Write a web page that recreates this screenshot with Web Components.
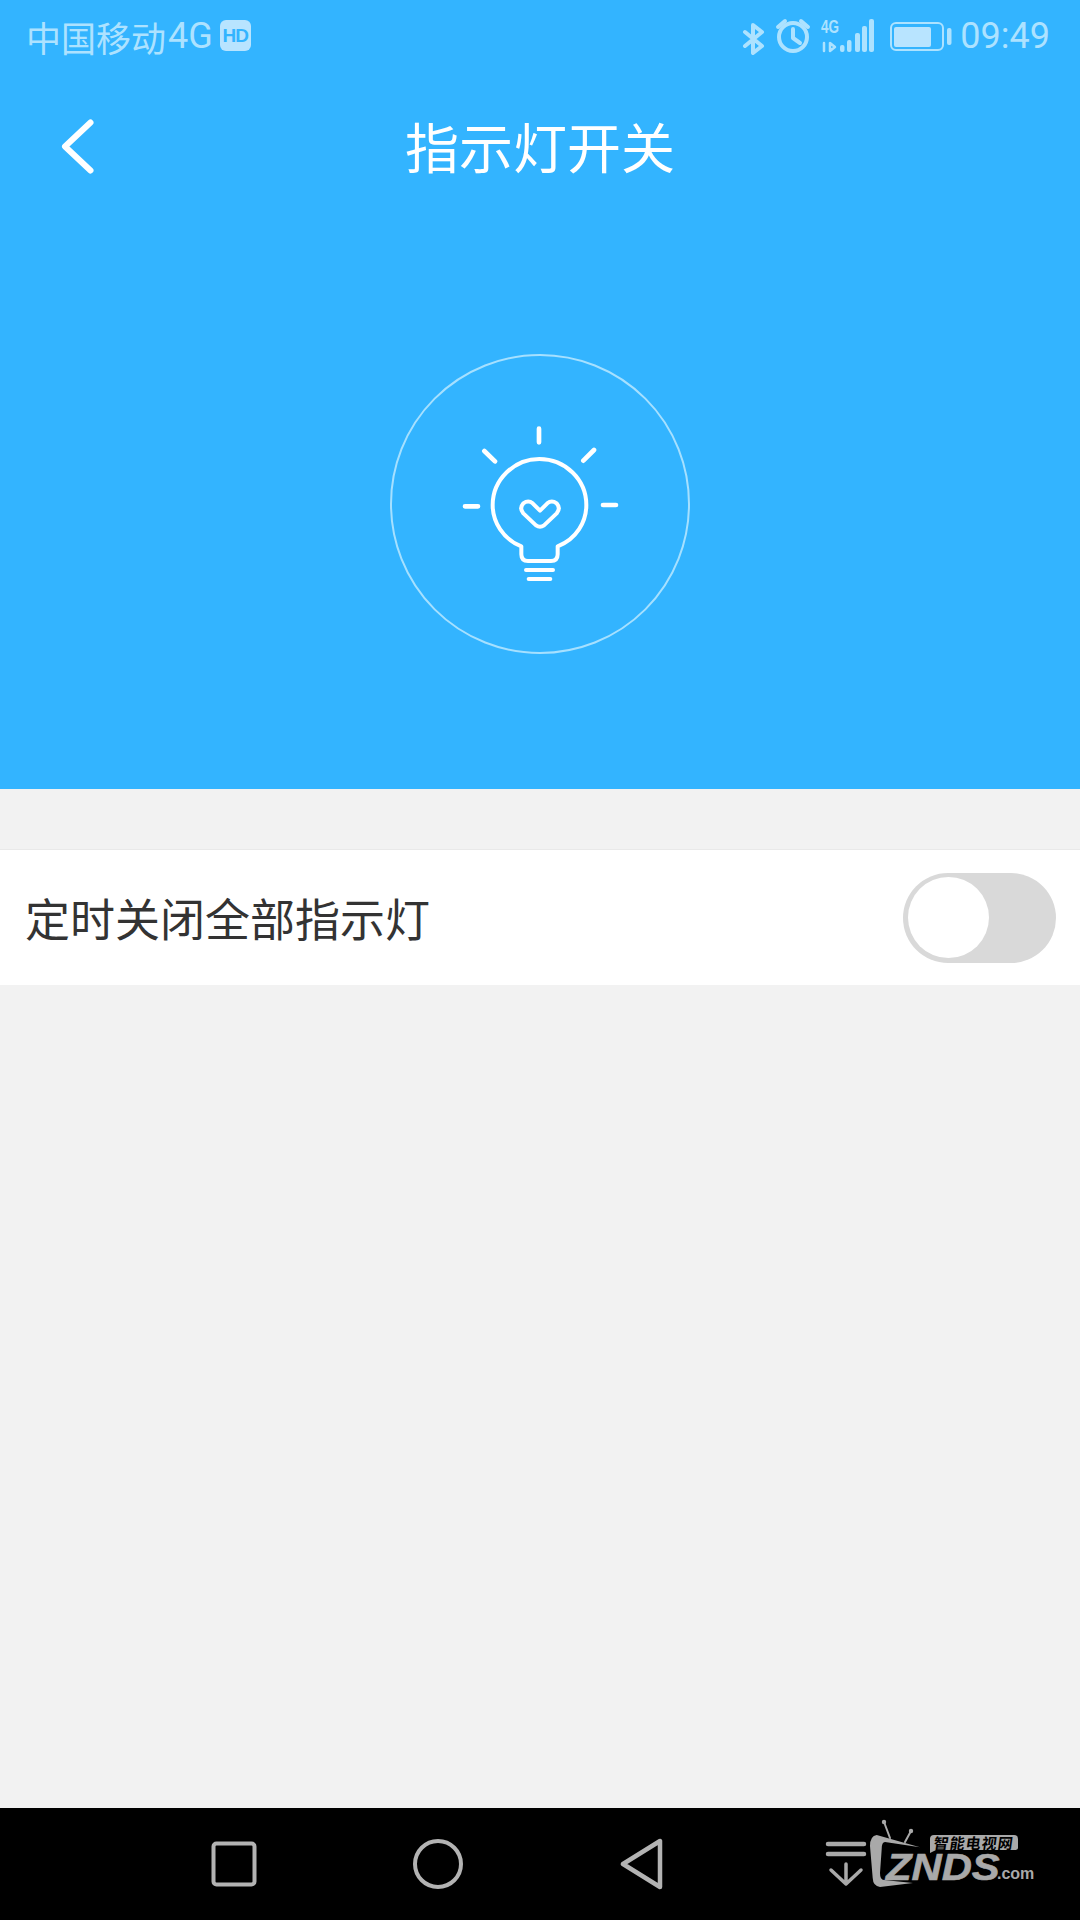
<!DOCTYPE html>
<html lang="zh">
<head>
<meta charset="utf-8">
<title>指示灯开关</title>
<style>
  html, body { margin: 0; padding: 0; }
  body {
    width: 1080px;
    height: 1920px;
    display: flex;
    flex-direction: column;
    background: #f2f2f2;
    font-family: "Noto Sans CJK SC", "Noto Sans", sans-serif;
  }
</style>
</head>
<body>
  <lamp-header title-text="指示灯开关">
    <status-bar carrier="中国移动" network="4G" time="09:49"></status-bar>
  </lamp-header>
  <main style="flex:1;display:block">
    <setting-row>定时关闭全部指示灯</setting-row>
  </main>
  <nav-bar></nav-bar>

<script>
class StatusBar extends HTMLElement {
  connectedCallback() {
    if (this.shadowRoot) return;
    const carrier = this.getAttribute("carrier") || "";
    const network = this.getAttribute("network") || "";
    const time = this.getAttribute("time") || "";
    const root = this.attachShadow({ mode: "open" });
    root.innerHTML = `
      <style>
        :host {
          display: flex;
          align-items: center;
          height: 72px;
          padding: 0 30px 0 26px;
          color: #ade2ff;
          font-size: 35px;
          line-height: 1;
        }
        .carrier { display: flex; align-items: center; flex: 1; }
        .carrier span { font-family: "Noto Sans CJK SC", sans-serif; font-weight: 400; }
        .carrier .net { font-family: Roboto, sans-serif; font-size: 36px; margin-left: 2px; }
        .hd {
          width: 31px;
          height: 31px;
          margin: -2px 0 0 7px;
          border-radius: 6px;
          background: #b8e4ff;
          color: #33b4ff;
          font: bold 19px/31px "Liberation Sans", sans-serif;
          text-align: center;
          letter-spacing: -1px;
        }
        svg { display: block; overflow: visible; }
        .icons { display: flex; align-items: center; }
        .time { font-family: Roboto, "Liberation Sans", sans-serif; font-weight: 400; font-size: 36px; margin-left: 8px; }
        .s { fill: none; stroke: #ade2ff; stroke-width: 4; stroke-linecap: round; stroke-linejoin: round; }
        .f { fill: #ade2ff; }
        text { font: bold 19px "Liberation Sans", sans-serif; fill: #ade2ff; }
      </style>
      <div class="carrier"><span>${carrier}</span><span class="net">${network}</span><div class="hd">HD</div></div>
      <div class="icons">
        <svg width="212" height="40" viewBox="740 16 212 40">
          <path class="s" d="M745 32 L762 46 L753 53 V25 L762 32 L745 46"/>
          <circle class="s" cx="793" cy="37" r="14"/>
          <path class="s" d="M793 29 V38 L800 43 M778 27 L785 21 M808 27 L801 21"/>
          <text x="821" y="33" textLength="18" lengthAdjust="spacingAndGlyphs">4G</text>
          <path class="s" style="stroke-width:2.500" d="M824 43 V51 M830 43 V51 L835 47 Z"/>
          <rect class="f" x="840" y="45" width="4.500" height="7" rx="2"/>
          <rect class="f" x="847" y="40" width="4.500" height="12" rx="2"/>
          <rect class="f" x="855" y="33" width="5" height="19" rx="2"/>
          <rect class="f" x="862" y="26" width="5" height="26" rx="2"/>
          <rect class="f" x="869" y="19" width="5" height="33" rx="2"/>
          <rect x="891" y="23" width="52" height="27" rx="5" fill="none" stroke="#ade2ff" stroke-width="2"/>
          <rect x="894" y="27" width="37" height="20" rx="2" fill="#b8e4ff"/>
          <rect class="f" x="947" y="28" width="4.500" height="17" rx="2"/>
        </svg>
        <span class="time">${time}</span>
      </div>
    `;
  }
}
customElements.define("status-bar", StatusBar);

class LampHeader extends HTMLElement {
  connectedCallback() {
    if (this.shadowRoot) return;
    const title = this.getAttribute("title-text") || "";
    const root = this.attachShadow({ mode: "open" });
    root.innerHTML = `
      <style>
        :host {
          display: block;
          height: 789px;
          background: #33b4ff;
          color: #fff;
        }
        .toolbar {
          height: 152px;
          display: grid;
          grid-template-columns: 140px 1fr 140px;
          align-items: center;
        }
        .back { padding: 0 0 3px 60px; }
        svg { display: block; }
        h1 {
          margin: 0;
          padding-bottom: 5px;
          text-align: center;
          font-family: "Noto Sans CJK SC", sans-serif;
          font-size: 54px;
          font-weight: 400;
          line-height: 1;
        }
        .hero { display: flex; justify-content: center; padding-top: 130px; }
      </style>
      <slot></slot>
      <div class="toolbar">
        <div class="back">
          <svg width="36" height="58" viewBox="0 0 36 58" fill="none" stroke="#fff" stroke-width="6" stroke-linecap="round" stroke-linejoin="round">
            <path d="M30.500 4.500 L5 28.500 L30.500 52.500"/>
          </svg>
        </div>
        <h1>${title}</h1>
      </div>
      <div class="hero">
        <svg width="320" height="320" viewBox="0 0 960 960" style="margin-top:-9px" fill="none" stroke="#fff" stroke-linecap="round" stroke-linejoin="round">
          <circle cx="480" cy="477" r="447" stroke="#a6e0ff" stroke-width="6"/>
          <g stroke-width="14">
            <path d="M477 251 V292 M313 318 L345 349 M642 315 L610 347 M255 484 H294 M669 480 H708"/>
            <path stroke-width="12" d="M424 604 C368 582 338 530 338 480 C338 404 402 342 478 342 C556 342 619 404 619 480 C619 530 590 582 533 604 V628 Q533 648 513 648 H444 Q424 648 424 628 Z"/>
            <path stroke-width="12" d="M438 675 H519 M446 702 H511"/>
            <path stroke-width="12" d="M480 497 L502 475 Q515 464 530 475 Q543 490 530 505 L492 541 Q480 549 468 541 L430 505 Q417 490 430 475 Q445 464 458 475 Z"/>
          </g>
        </svg>
      </div>
    `;
  }
}
customElements.define("lamp-header", LampHeader);

class ToggleSwitch extends HTMLElement {
  connectedCallback() {
    if (this.shadowRoot) return;
    const root = this.attachShadow({ mode: "open" });
    root.innerHTML = `
      <style>
        :host {
          display: flex;
          align-items: center;
          box-sizing: border-box;
          width: 153px;
          height: 90px;
          padding: 0 5px;
          border-radius: 45px;
          background: #d9d9d9;
        }
        .knob { width: 81px; height: 81px; border-radius: 50%; background: #fff; }
      </style>
      <div class="knob"></div>
    `;
  }
}
customElements.define("toggle-switch", ToggleSwitch);

class SettingRow extends HTMLElement {
  connectedCallback() {
    if (this.shadowRoot) return;
    const root = this.attachShadow({ mode: "open" });
    root.innerHTML = `
      <style>
        :host {
          display: flex;
          align-items: center;
          justify-content: space-between;
          box-sizing: border-box;
          height: 136px;
          margin-top: 60px;
          padding: 0 24px 0 25px;
          background: #fff;
          border-top: 1px solid #e9e9e9;
          color: #333;
          font-family: "Noto Sans CJK SC", sans-serif;
          font-size: 45px;
          font-weight: 400;
          line-height: 1;
        }
      </style>
      <slot></slot>
      <toggle-switch></toggle-switch>
    `;
  }
}
customElements.define("setting-row", SettingRow);

class ZndsLogo extends HTMLElement {
  connectedCallback() {
    if (this.shadowRoot) return;
    const root = this.attachShadow({ mode: "open" });
    root.innerHTML = `
      <style>
        :host {
          display: block;
          position: relative;
          width: 212px;
          height: 80px;
          color: #a9a9a9;
        }
        svg { display: block; overflow: visible; }
        span { position: absolute; white-space: nowrap; line-height: 1; }
        .cn {
          left: 110px;
          top: 11px;
          font: bold 15px/1 "Noto Sans CJK SC", sans-serif;
          letter-spacing: 1px;
          color: #000;
          transform: skewX(-8deg);
        }
        .znds {
          left: 62px;
          top: 26px;
          font: italic bold 36px/1 "Liberation Sans", sans-serif;
          -webkit-text-stroke: 0.6px #a9a9a9;
          transform: scaleX(1.16);
          transform-origin: left top;
        }
        .com {
          left: 173px;
          top: 42px;
          font: bold 16px/1 "Liberation Sans", sans-serif;
        }
      </style>
      <svg width="212" height="80" viewBox="0 0 212 80" fill="none" stroke="#a9a9a9" stroke-linecap="round" stroke-linejoin="round">
        <path stroke-width="4.500" d="M4 20 H40 M4 30 H40"/>
        <path stroke-width="3.500" d="M22 40 V60 M7 46 L22 60 L37 46"/>
        <path stroke-width="2" d="M60 -2 L66 14 M87 7 L81 18"/>
        <circle cx="60" cy="-2" r="2.200" fill="#a9a9a9" stroke="none"/>
        <circle cx="87" cy="7" r="2.200" fill="#a9a9a9" stroke="none"/>
        <path fill="#a9a9a9" stroke="none" d="M52.700 11 L96 23.300 L61 18 Q57.700 18 57.700 25 L56 49 Q56 56 60 56 L89 59 L56 63 Q49 62 48.700 54 L46 22 Q46 12 52.700 11 Z"/>
        <path fill="#a9a9a9" stroke="none" d="M110 11 H190 Q194 11 194 15 V24 Q194 26 190 26 H112 L106 29 L106 15 Q106 11 110 11 Z"/>
      </svg>
      <span class="cn">智能电视网</span>
      <span class="znds">ZNDS</span>
      <span class="com">.com</span>
    `;
  }
}
customElements.define("znds-logo", ZndsLogo);

class NavBar extends HTMLElement {
  connectedCallback() {
    if (this.shadowRoot) return;
    const root = this.attachShadow({ mode: "open" });
    root.innerHTML = `
      <style>
        :host {
          display: flex;
          flex: none;
          align-items: center;
          height: 112px;
          padding-left: 132px;
          background: #000;
        }
        .slot { width: 204px; display: flex; justify-content: center; flex: none; }
        .logo { justify-content: flex-start; padding-left: 80px; box-sizing: border-box; }
        svg { display: block; }
      </style>
      <div class="slot">
        <svg width="46" height="46" viewBox="0 0 46 46"><rect x="2.500" y="2.500" width="41" height="41" rx="3" fill="none" stroke="#b3b3b3" stroke-width="4"/></svg>
      </div>
      <div class="slot">
        <svg width="50" height="50" viewBox="0 0 50 50"><circle cx="25" cy="25" r="23" fill="none" stroke="#b3b3b3" stroke-width="4"/></svg>
      </div>
      <div class="slot">
        <svg width="44" height="52" viewBox="0 0 44 52"><path d="M40 3 V49 L3 26 Z" fill="none" stroke="#b3b3b3" stroke-width="4.500" stroke-linejoin="round"/></svg>
      </div>
      <div class="slot logo"><znds-logo></znds-logo></div>
    `;
  }
}
customElements.define("nav-bar", NavBar);
</script>
</body>
</html>
